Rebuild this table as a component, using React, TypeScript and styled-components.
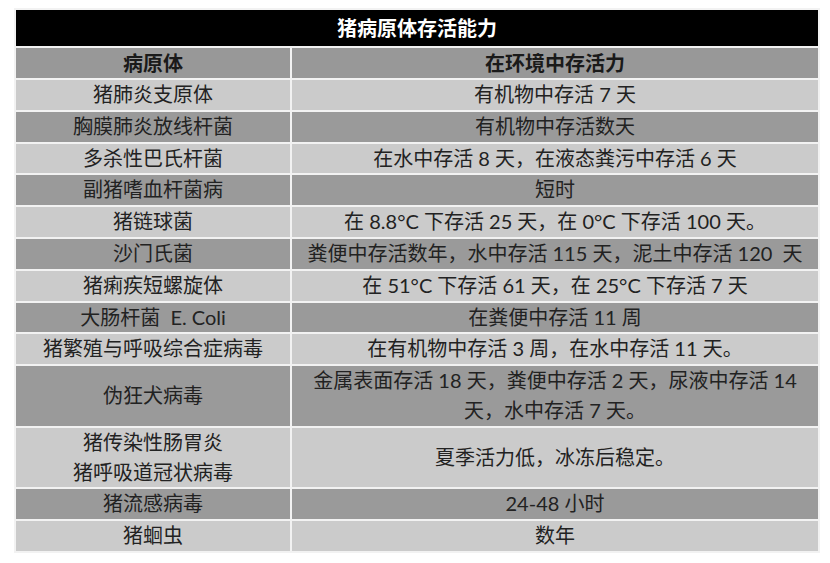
import styled, { createGlobalStyle } from "styled-components";

const GlobalStyle = createGlobalStyle`
  body {
    margin: 0;
    background: #fff;
    font-family: Lato, "Noto Sans CJK SC", sans-serif;
  }
`;

type Row = {
  name: string[];
  life: string[];
  tone: "light" | "dark";
};

const rows: Row[] = [
  { name: ["猪肺炎支原体"], life: ["有机物中存活 7 天"], tone: "light" },
  { name: ["胸膜肺炎放线杆菌"], life: ["有机物中存活数天"], tone: "dark" },
  { name: ["多杀性巴氏杆菌"], life: ["在水中存活 8 天，在液态粪污中存活 6 天"], tone: "light" },
  { name: ["副猪嗜血杆菌病"], life: ["短时"], tone: "dark" },
  { name: ["猪链球菌"], life: ["在 8.8°C 下存活 25 天，在 0°C 下存活 100 天。"], tone: "light" },
  { name: ["沙门氏菌"], life: ["粪便中存活数年，水中存活 115 天，泥土中存活 120\u00a0 天"], tone: "dark" },
  { name: ["猪痢疾短螺旋体"], life: ["在 51°C 下存活 61 天，在 25°C 下存活 7 天"], tone: "light" },
  { name: ["大肠杆菌\u00a0 E. Coli"], life: ["在粪便中存活 11 周"], tone: "dark" },
  { name: ["猪繁殖与呼吸综合症病毒"], life: ["在有机物中存活 3 周，在水中存活 11 天。"], tone: "light" },
  {
    name: ["伪狂犬病毒"],
    life: ["金属表面存活 18 天，粪便中存活 2 天，尿液中存活 14", "天，水中存活 7 天。"],
    tone: "dark",
  },
  { name: ["猪传染性肠胃炎", "猪呼吸道冠状病毒"], life: ["夏季活力低，冰冻后稳定。"], tone: "light" },
  { name: ["猪流感病毒"], life: ["24-48 小时"], tone: "dark" },
  { name: ["猪蛔虫"], life: ["数年"], tone: "light" },
];

function Lines({ lines }: { lines: string[] }) {
  return (
    <>
      {lines.map((line, i) => (
        <span key={i}>
          {i > 0 && <br />}
          {line}
        </span>
      ))}
    </>
  );
}

export default function App() {
  return (
    <>
      <GlobalStyle />
      <Page>
        <Table>
          <colgroup>
            <Col $width={276} />
            <Col $width={528} />
          </colgroup>
          <thead>
            <tr>
              <TitleCell colSpan={2}>猪病原体存活能力</TitleCell>
            </tr>
            <tr>
              <HeadCell>病原体</HeadCell>
              <HeadCell>在环境中存活力</HeadCell>
            </tr>
          </thead>
          <tbody>
            {rows.map((row, i) => {
              const topAligned = row.life.length > 1;
              return (
                <tr key={i}>
                  <Cell $tone={row.tone}>
                    <Lines lines={row.name} />
                  </Cell>
                  <Cell $tone={row.tone} $top={topAligned}>
                    <Lines lines={row.life} />
                  </Cell>
                </tr>
              );
            })}
          </tbody>
        </Table>
      </Page>
    </>
  );
}

const Page = styled.div`
  padding: 8px 12px 0 14px;
`;

const Table = styled.table`
  width: 804px;
  border-collapse: collapse;
  table-layout: fixed;
  color: #222;
  font-size: 20px;
`;

const Col = styled.col<{ $width: number }>`
  width: ${({ $width }) => $width}px;
`;

const TitleCell = styled.th`
  background: #000;
  color: #fff;
  height: 36px;
  padding: 0;
  font-weight: 700;
  font-size: 20px;
  text-align: center;
  border: 2px solid #f2f2f2;
  line-height: 30px;
`;

const HeadCell = styled.th`
  background: #989898;
  color: #1a1a1a;
  padding: 0;
  font-weight: 700;
  text-align: center;
  line-height: 30px;
  border: 2px solid #f2f2f2;
`;

const Cell = styled.td<{ $tone: "light" | "dark"; $top?: boolean }>`
  background: ${({ $tone }) => ($tone === "light" ? "#cbcbcb" : "#9a9a9a")};
  padding: 0 4px;
  text-align: center;
  vertical-align: ${({ $top }) => ($top ? "top" : "middle")};
  line-height: 29.8px;
  border: 2px solid #f2f2f2;
  white-space: nowrap;
`;
